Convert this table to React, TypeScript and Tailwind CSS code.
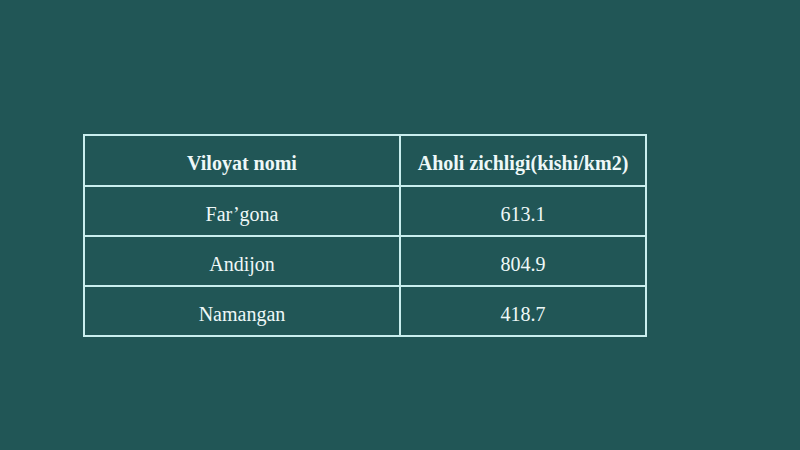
export default function App() {
  const rows = [
    ["Far\u2019gona", "613.1"],
    ["Andijon", "804.9"],
    ["Namangan", "418.7"],
  ];
  return (
    <div
      className="w-[800px] h-[450px] bg-[#215656] flex flex-col items-start pl-[83px] pt-[134px] text-[#eef8f8]"
      style={{ fontFamily: '"Liberation Serif", serif' }}
    >
      <table className="border-collapse border-2 border-[#c9eeee] text-[20px]">
        <thead>
          <tr className="h-[51px]">
            <th className="w-[316px] border-2 border-[#c9eeee] font-bold text-center p-0 pt-[4px]">Viloyat nomi</th>
            <th className="w-[246px] border-2 border-[#c9eeee] font-bold text-center p-0 pt-[4px]">Aholi zichligi(kishi/km2)</th>
          </tr>
        </thead>
        <tbody>
          {rows.map((r) => (
            <tr key={r[0]} className="h-[50px]">
              <td className="border-2 border-[#c9eeee] text-center p-0 pt-[6px]">{r[0]}</td>
              <td className="border-2 border-[#c9eeee] text-center p-0 pt-[6px]">{r[1]}</td>
            </tr>
          ))}
        </tbody>
      </table>
    </div>
  );
}
